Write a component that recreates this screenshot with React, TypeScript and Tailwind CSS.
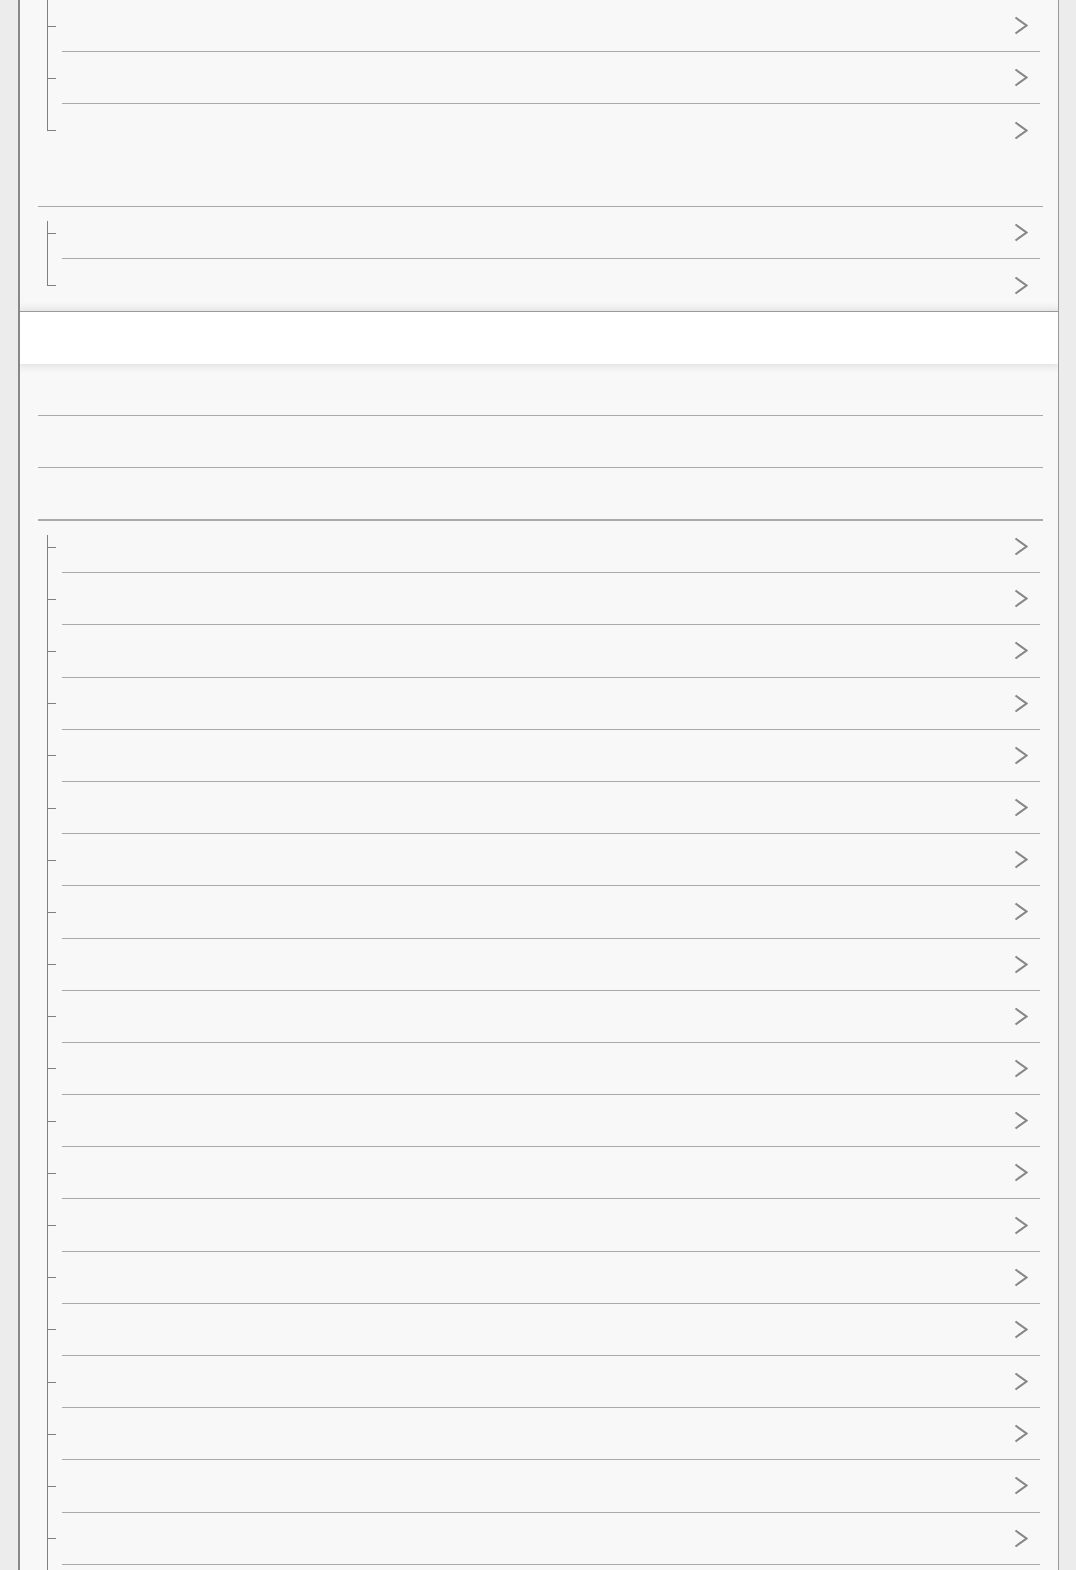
import React from "react";

const Chevron = () => (
  <svg width="14" height="19" viewBox="0 0 14 19" className="shrink-0 text-[#878787]">
    <polyline points="1.5,1.5 12.5,9.5 1.5,17.5" fill="none" stroke="currentColor" strokeWidth="2.1" />
  </svg>
);

type Pos = "cont" | "first" | "mid" | "last";

const Gutter = ({ pos }: { pos: Pos }) => (
  <div className="w-[42px] shrink-0 h-full flex flex-col pl-[27px]">
    <div className="flex-1 flex flex-col">
      {pos === "first" ? (
        <div className="mt-auto h-[12px] border-l border-[#808080]" />
      ) : (
        <div className="flex-1 border-l border-[#808080]" />
      )}
    </div>
    <div className="h-px w-[9px] bg-[#808080]" />
    <div className="flex-1 flex flex-col">
      {pos !== "last" && <div className="flex-1 border-l border-[#808080]" />}
    </div>
  </div>
);

const ChildRow = ({ pos, border, h }: { pos: Pos; border: boolean; h: string }) => (
  <div className={`flex shrink-0 ${h}`}>
    <Gutter pos={pos} />
    <div
      className={`flex-1 mr-[18px] flex items-center justify-end pr-[12px] ${
        border ? "border-b border-[#a9a9a9]" : ""
      }`}
    >
      <Chevron />
    </div>
  </div>
);

const ParentRow = ({ h, thick }: { h: string; thick?: boolean }) => (
  <div className={`${h} shrink-0 ml-[18px] mr-[15px] ${thick ? "border-b-2" : "border-b"} border-[#a9a9a9]`} />
);

export default function App() {
  const group3 = Array.from({ length: 21 }, (_, i) => i);
  return (
    <div className="w-[1076px] h-[1570px] overflow-hidden bg-[#ececec] pl-[18px] pr-[17px] font-['Liberation_Sans',sans-serif]">
      <div className="h-full overflow-hidden bg-[#f8f8f8] border-l-2 border-r border-l-[#888888] border-r-[#999999] flex flex-col">
        {/* group 1 */}
        <ChildRow pos="cont" border h="h-[52px]" />
        <ChildRow pos="mid" border h="h-[52px]" />
        <ChildRow pos="last" border={false} h="h-[52px]" />
        <ParentRow h="h-[51px]" />
        {/* group 2 */}
        <ChildRow pos="first" border h="h-[52px]" />
        <ChildRow pos="last" border={false} h="h-[52px]" />
        {/* sticky header */}
        <div className="relative z-10 h-[53px] shrink-0 bg-white border-t border-[#9a9a9a] shadow-[0_0_8px_2px_rgba(0,0,0,0.11)]" />
        <ParentRow h="h-[52px]" />
        <ParentRow h="h-[52px]" />
        <ParentRow h="h-[53px]" thick />
        {/* group 3 */}
        {group3.map((i) => (
          <ChildRow key={i} pos={i === 0 ? "first" : "mid"} border h="h-[52.2px]" />
        ))}
      </div>
    </div>
  );
}
